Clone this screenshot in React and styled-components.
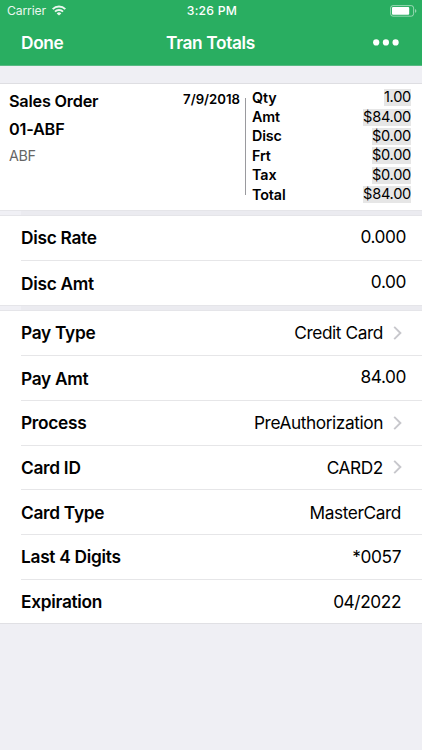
import React from "react";
import styled, { createGlobalStyle } from "styled-components";

const totals = [
  { label: "Qty", value: "1.00" },
  { label: "Amt", value: "$84.00" },
  { label: "Disc", value: "$0.00" },
  { label: "Frt", value: "$0.00" },
  { label: "Tax", value: "$0.00" },
  { label: "Total", value: "$84.00" },
];

const discountRows = [
  { label: "Disc Rate", value: "0.000", type: "input" },
  { label: "Disc Amt", value: "0.00", type: "input" },
];

const paymentRows = [
  { label: "Pay Type", value: "Credit Card", type: "link" },
  { label: "Pay Amt", value: "84.00", type: "input" },
  { label: "Process", value: "PreAuthorization", type: "link" },
  { label: "Card ID", value: "CARD2", type: "link" },
  { label: "Card Type", value: "MasterCard" },
  { label: "Last 4 Digits", value: "*0057" },
  { label: "Expiration", value: "04/2022" },
];

const WifiIcon = () => (
  <svg width="14" height="11" viewBox="0 0 14 11" fill="none" stroke="#fff" strokeWidth="2">
    <path d="M0.7 4.1 A9 9 0 0 1 13.3 4.1" />
    <path d="M3 6.6 A5.8 5.8 0 0 1 11 6.6" />
    <path d="M7 10.6 L4.7 8.4 A3.3 3.3 0 0 1 9.3 8.4 Z" fill="#fff" stroke="none" />
  </svg>
);

const BatteryIcon = () => (
  <svg width="27" height="12" viewBox="0 0 27 12" fill="none">
    <rect x="0.6" y="0.6" width="23" height="10.6" rx="2.4" stroke="#fff" strokeOpacity="0.5" />
    <rect x="2" y="2" width="17.2" height="7.8" rx="1" fill="#fff" />
    <path d="M25 4 Q26.4 4.5 26.4 5.9 Q26.4 7.3 25 7.8 Z" fill="#fff" fillOpacity="0.5" />
  </svg>
);

const Chevron = () => (
  <svg width="9" height="14" viewBox="0 0 9 14" fill="none" stroke="#c7c7cc" strokeWidth="1.9">
    <path d="M1.2 0.9 L7.4 7 L1.2 13.1" />
  </svg>
);

const Rows = ({ rows }) => (
  <List>
    {rows.map((row) => (
      <Row key={row.label}>
        <Label>{row.label}</Label>
        <Value $type={row.type}>{row.value}</Value>
        {row.type === "link" && <Chevron />}
      </Row>
    ))}
  </List>
);

const App = () => {
  return (
    <>
      <GlobalStyle />
      <Screen>
        <Header>
          <StatusBar>
            <Carrier>
              Carrier
              <WifiIcon />
            </Carrier>
            <Time>3:26 PM</Time>
            <Battery>
              <BatteryIcon />
            </Battery>
          </StatusBar>
          <NavBar>
            <Done>Done</Done>
            <Title>Tran Totals</Title>
            <More aria-label="More">
              <svg width="26" height="7" viewBox="0 0 26 7" fill="#fff">
                <circle cx="3.2" cy="3.4" r="3.1" />
                <circle cx="12.9" cy="3.4" r="3.1" />
                <circle cx="22.6" cy="3.4" r="3.1" />
              </svg>
            </More>
          </NavBar>
        </Header>
        <Summary>
          <Order>
            <OrderType>Sales Order</OrderType>
            <OrderType>01-ABF</OrderType>
            <Customer>ABF</Customer>
          </Order>
          <OrderDate>7/9/2018</OrderDate>
          <Totals>
            {totals.map((total) => (
              <TotalRow key={total.label}>
                <TotalLabel>{total.label}</TotalLabel>
                <TotalValue>{total.value}</TotalValue>
              </TotalRow>
            ))}
          </Totals>
        </Summary>
        <Gap />
        <Rows rows={discountRows} />
        <Gap />
        <Rows rows={paymentRows} />
        <Footer />
      </Screen>
    </>
  );
};

const GlobalStyle = createGlobalStyle`
  * {
    box-sizing: border-box;
  }

  body {
    margin: 0;
    font-family: Inter, "Liberation Sans", sans-serif;
    color: #000;
    background: #efeff4;
  }

  svg {
    display: block;
    flex-shrink: 0;
  }
`;

const Screen = styled.div`
  width: 422px;
  height: 750px;
  overflow: hidden;
  background: #efeff4;
`;

const Header = styled.header`
  height: 66px;
  background: #29ae61;
  border-bottom: 1px solid #58b983;
  color: #fff;
`;

const StatusBar = styled.div`
  display: grid;
  grid-template-columns: 1fr auto 1fr;
  align-items: center;
  height: 21px;
  padding: 0 5px 0 7px;
  font-size: 12.2px;
`;

const Carrier = styled.div`
  display: flex;
  align-items: center;
  gap: 6px;
  letter-spacing: -0.15px;
  opacity: 0.9;
`;

const Time = styled.div`
  font-weight: 500;
  letter-spacing: 0.25px;
`;

const Battery = styled.div`
  display: flex;
  justify-content: flex-end;
`;

const NavBar = styled.nav`
  display: grid;
  grid-template-columns: 1fr auto 1fr;
  align-items: center;
  height: 43px;
  padding: 0 22px 0 21px;
  font-size: 17.3px;
  font-weight: 600;
  letter-spacing: -0.35px;
`;

const Done = styled.div`
  white-space: nowrap;
`;

const Title = styled.div`
  white-space: nowrap;
`;

const More = styled.div`
  display: flex;
  justify-content: flex-end;
  padding: 0 1px 1px 0;
`;

const Summary = styled.section`
  display: flex;
  height: 127px;
  margin-top: 17px;
  padding: 4px 10px 0 9px;
  background: #fff;
  border-top: 1px solid #dedee2;
`;

const Order = styled.div`
  flex: 1;
`;

const OrderType = styled.div`
  height: 28px;
  font-size: 16.3px;
  line-height: 26px;
  font-weight: 600;
  letter-spacing: -0.22px;
`;

const Customer = styled.div`
  font-size: 14.3px;
  line-height: 23px;
  letter-spacing: -0.3px;
  color: #666;
`;

const OrderDate = styled.div`
  padding-right: 5px;
  font-size: 13.2px;
  line-height: 23px;
  font-weight: 600;
`;

const Totals = styled.div`
  width: 167px;
  height: 118px;
  padding: 0 1px 0 7px;
  background: linear-gradient(#9a9a9e, #9a9a9e) 0 10px / 1px 97px no-repeat;
`;

const TotalRow = styled.div`
  display: flex;
  justify-content: space-between;
  align-items: center;
  height: 19.4px;
`;

const TotalLabel = styled.span`
  font-size: 14.3px;
  line-height: 18px;
  font-weight: 600;
  letter-spacing: -0.1px;
`;

const TotalValue = styled.span`
  font-size: 14.6px;
  line-height: 17px;
  letter-spacing: -0.28px;
  background: #e6e6e6;
`;

const Gap = styled.div`
  height: 5.6px;
  background: linear-gradient(to right, #f0f0f5 21px, #ebebf0 21px);
  border-top: 1px solid #e5e5e9;
  border-bottom: 1px solid #e5e5e9;
`;

const List = styled.section`
  background: #fff;
`;

const Row = styled.div`
  display: flex;
  align-items: center;
  height: 44.7px;
  padding-right: 21px;
  margin-left: 21px;

  & + & {
    border-top: 1px solid #e6e6e8;
  }

  svg {
    margin: 0 -1px 0 10px;
  }
`;

const Label = styled.div`
  flex: 1;
  font-size: 17.3px;
  font-weight: 600;
  letter-spacing: -0.28px;
`;

const Value = styled.div`
  font-size: 17.3px;
  letter-spacing: -0.42px;
  ${({ $type }) => $type === "input" && "margin: 0 -5px 3px 0;"}
`;

const Footer = styled.footer`
  border-top: 1px solid #e0e0e4;
`;

export default App;
